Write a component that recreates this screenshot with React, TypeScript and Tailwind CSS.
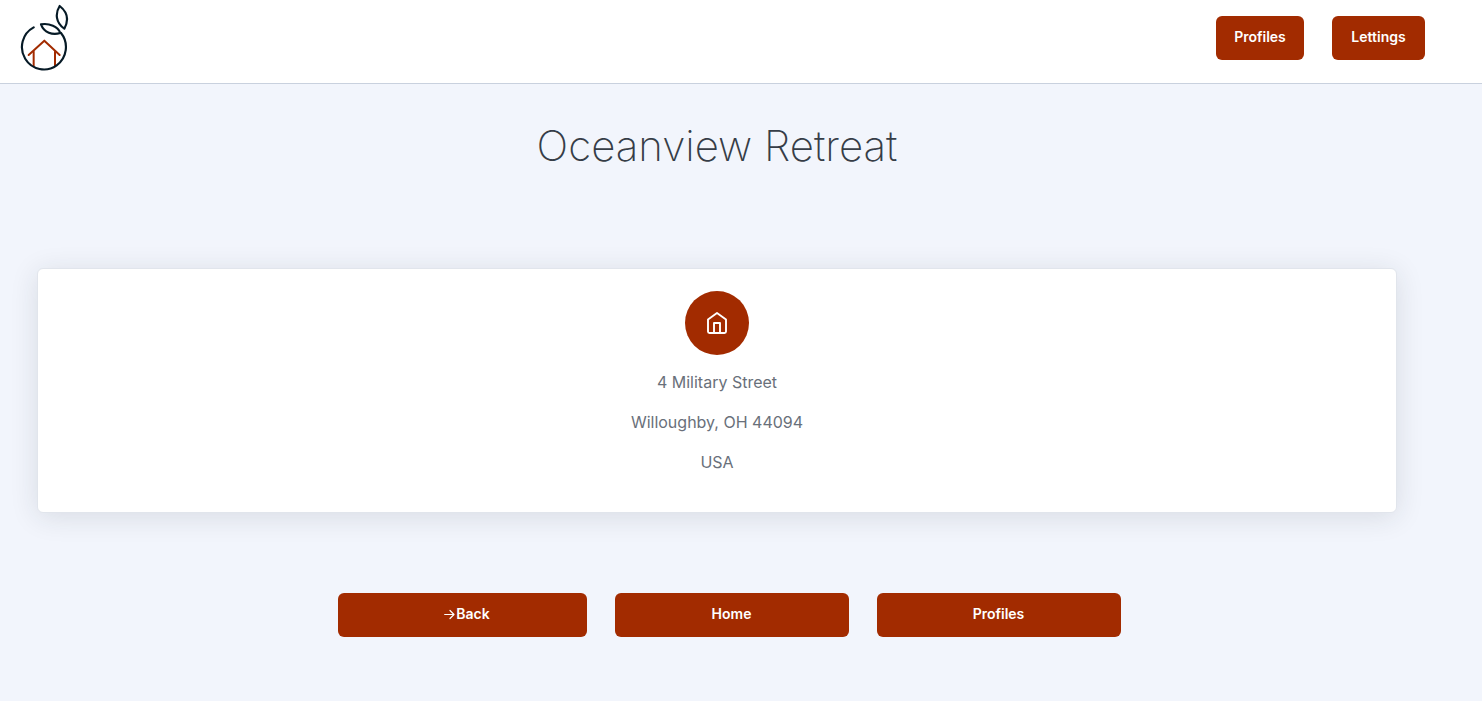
import type { ReactNode } from "react";

function Logo() {
  return (
    <svg
      viewBox="60 12 150 204"
      className="h-17 w-[50px]"
      fill="none"
      strokeLinecap="round"
      strokeLinejoin="round"
      role="img"
      aria-label="Logo"
    >
      <g stroke="#a22b00" strokeWidth="6">
        <path d="M86 165 133 122 179 165" />
        <path d="M101 155V198" />
        <path d="M165 155V197" />
      </g>
      <g stroke="#061a26" strokeWidth="6.5">
        <path d="M101 82A66 67 0 1 0 183 99" />
        <path d="M123 73C148 69 174 79 181 99C157 106 132 98 123 73Z" />
        <path d="M179 18C165 40 167 68 193 86C207 60 202 36 179 18Z" />
      </g>
    </svg>
  );
}

function HouseIcon() {
  return (
    <svg
      viewBox="0 0 24 24"
      className="size-6"
      fill="none"
      stroke="currentColor"
      strokeWidth="1.9"
      strokeLinejoin="round"
      aria-hidden="true"
    >
      <path d="M3 8.500 12 2 21 8.500V20.500a1.500 1.500 0 0 1-1.500 1.500H4.500a1.500 1.500 0 0 1-1.500-1.500Z" />
      <path d="M9 22V12H15V22" />
    </svg>
  );
}

function ArrowIcon() {
  return (
    <svg
      viewBox="0 0 12 12"
      className="size-3"
      fill="none"
      stroke="currentColor"
      strokeWidth="1.2"
      strokeLinecap="round"
      strokeLinejoin="round"
      aria-hidden="true"
    >
      <path d="M0.700 6.500H10M6 2.500 10 6.500 6 10.500" />
    </svg>
  );
}

function Button({ className, children }: { className: string; children: ReactNode }) {
  return (
    <button
      type="button"
      className={`flex h-11 items-center justify-center rounded-md bg-[#a22b00] pb-0.5 text-sm font-semibold text-white ${className}`}
    >
      {children}
    </button>
  );
}

export default function App() {
  return (
    <div className="flex min-h-screen flex-col bg-[#f2f5fc] font-['Inter','Liberation_Sans',sans-serif]">
      <header className="flex items-start justify-between border-b border-[#c9d1de] bg-white pr-[57px] pb-[11px] pl-5">
        <a href="#" className="pt-1">
          <Logo />
        </a>
        <nav className="flex gap-7 pt-4">
          <Button className="w-[88px]">Profiles</Button>
          <Button className="w-[93px]">Lettings</Button>
        </nav>
      </header>

      <main className="pt-9 pr-[85px] pb-16 pl-[37px]">
        <h1 className="text-center text-[42px] leading-[52px] font-extralight text-[#363d47]">
          Oceanview Retreat
        </h1>

        <section className="mt-24 flex flex-col items-center rounded-md border border-[#e1e5ec] bg-white px-6 pt-[22px] pb-[38px] shadow-[0_4px_28px_rgba(33,40,50,0.12)]">
          <div className="mb-[15px] flex size-16 items-center justify-center rounded-full bg-[#a22b00] text-white">
            <HouseIcon />
          </div>
          <address className="flex flex-col gap-4 text-center text-base text-[#69707a] not-italic">
            <p>4 Military Street</p>
            <p>Willoughby, OH 44094</p>
            <p>USA</p>
          </address>
        </section>

        <div className="mt-20 flex justify-center gap-7 pl-6">
          <Button className="w-[249px] pl-2.5">
            <ArrowIcon />
            Back
          </Button>
          <Button className="w-[234px]">Home</Button>
          <Button className="w-[244px]">Profiles</Button>
        </div>
      </main>
    </div>
  );
}
